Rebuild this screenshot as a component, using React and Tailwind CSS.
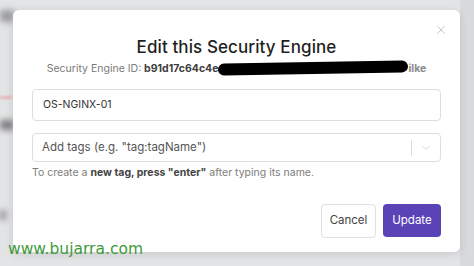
import { X, ChevronDown } from 'lucide-react'

export default function App() {
  return (
    <div className="relative w-[474px] h-[266px] overflow-hidden bg-[#e3e4e6]" style={{ fontFamily: 'Inter, "Noto Sans", sans-serif' }}>
      {/* blurred page behind the overlay */}
      <div className="absolute left-0 top-[10px] w-[14px] h-[12px] bg-[#9a9b9f] blur-[3px]" />
      <div className="absolute left-0 top-[96px] w-[12px] h-[3px] bg-[#e7b7b7] blur-[1px]" />
      <div className="absolute left-0 top-[120px] w-[14px] h-[10px] bg-[#7c7d80] blur-[3px]" />
      <div className="absolute left-0 top-[210px] w-[6px] h-[10px] bg-[#8e8f92] blur-[3px]" />
      <div className="absolute right-0 top-0 w-[14px] h-full bg-[#d9dadd]" />

      <div className="relative ml-[13px] mt-[10px] w-[447px] h-[242px] bg-white rounded-[6px] shadow-[0_2px_10px_rgba(0,0,0,0.12)] px-[19px] pt-[26px]">
        <X className="absolute right-[12px] top-[13px] w-[14px] h-[14px] text-[#b5b5b5]" strokeWidth={1.3} />

        <h2 className="text-center text-[17px] leading-[22px] font-medium text-[#1f1f1f] tracking-[0.1px]">Edit this Security Engine</h2>
        <p className="mt-[4px] text-center text-[10.5px] leading-[14px] text-[#7a7a7a] whitespace-nowrap">
          Security Engine ID: <span className="font-bold text-[#3d3d3d]">b91d17c64c4e</span>
          <span className="inline-block align-middle w-[190px] h-[12px] -mt-[3px] bg-black rounded-full -rotate-1" />
          <span className="font-bold text-[#8a8a8a]">ilke</span>
        </p>

        <div className="mt-[13px] h-[32px] border border-[#dedede] rounded-[4px] flex items-center px-[10px] text-[10.5px] text-[#333]">
          OS-NGINX-01
        </div>

        <div className="mt-[12px] h-[29px] border border-[#dedede] rounded-[4px] flex items-center pl-[9px] text-[11.5px] text-[#555]">
          <span className="flex-1">Add tags (e.g. "tag:tagName")</span>
          <span className="w-px h-[16px] bg-[#dcdcdc]" />
          <span className="w-[28px] flex justify-center">
            <ChevronDown className="w-[12px] h-[12px] text-[#c4c4c4]" strokeWidth={1.5} />
          </span>
        </div>
        <p className="mt-[4px] text-[10.5px] leading-[13px] text-[#7d7d7d]">
          To create a <b className="text-[#444]">new tag, press "enter"</b> after typing its name.
        </p>

        <div className="mt-[25px] flex justify-end gap-[7px]">
          <button className="h-[34px] w-[55px] border border-[#e0e0e0] rounded-[4px] text-[11.5px] text-[#444] bg-white">Cancel</button>
          <button className="h-[33px] w-[58px] rounded-[4px] text-[11.5px] text-white bg-[#5a43b6]">Update</button>
        </div>
      </div>

      <span className="absolute left-[8px] top-[239px] text-[15.5px] leading-[20px] text-[#3f9a3a]" style={{ fontFamily: '"DejaVu Sans", sans-serif' }}>
        www.bujarra.com
      </span>
    </div>
  )
}
